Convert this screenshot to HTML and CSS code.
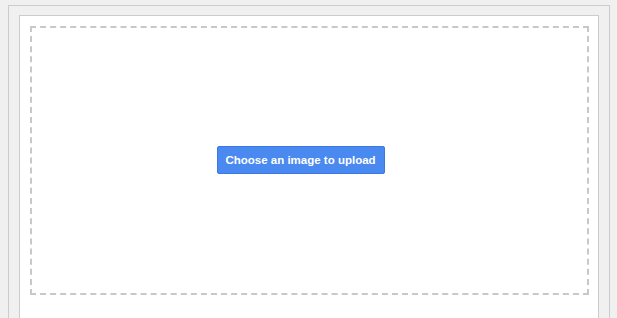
FILE: index.html
```html
<!DOCTYPE html>
<html lang="en">
<head>
  <meta charset="UTF-8" />
  <title>Image upload</title>
  <link rel="stylesheet" href="styles.css">
</head>
<body>
  <div class="frame">
    <div class="panel">
      <div class="dropzone">
        <button class="upload-btn">Choose an image to upload</button>
      </div>
    </div>
  </div>
</body>
</html>
```

FILE: styles.css
```css
* {
  box-sizing: border-box;
  margin: 0;
  padding: 0;
}

body {
  font-family: 'Liberation Sans', Arial, sans-serif;
  background-color: #f0f0f0;
  padding: 5px 7px 0 8px;
}

.frame {
  border: 1px solid #cccccc;
  border-bottom: none;
  padding: 9px 10px 0 10px;
  height: 313px;
}

.panel {
  background: #fff;
  border: 1px solid #cccccc;
  border-bottom: none;
  padding: 10px 9px 0 10px;
  height: 303px;
}

.dropzone {
  border: 2px dashed #c8c8c8;
  height: 269px;
  display: flex;
  justify-content: center;
  align-items: center;
}

.upload-btn {
  background-color: #4a89f0;
  border: 1px solid #3b78e7;
  border-radius: 2px;
  color: #fff;
  font-family: 'Liberation Sans', Arial, sans-serif;
  font-weight: bold;
  font-size: 11.5px;
  white-space: nowrap;
  width: 168px;
  height: 28px;
  cursor: pointer;
  margin: 0 18px 1px 0;
}
```
